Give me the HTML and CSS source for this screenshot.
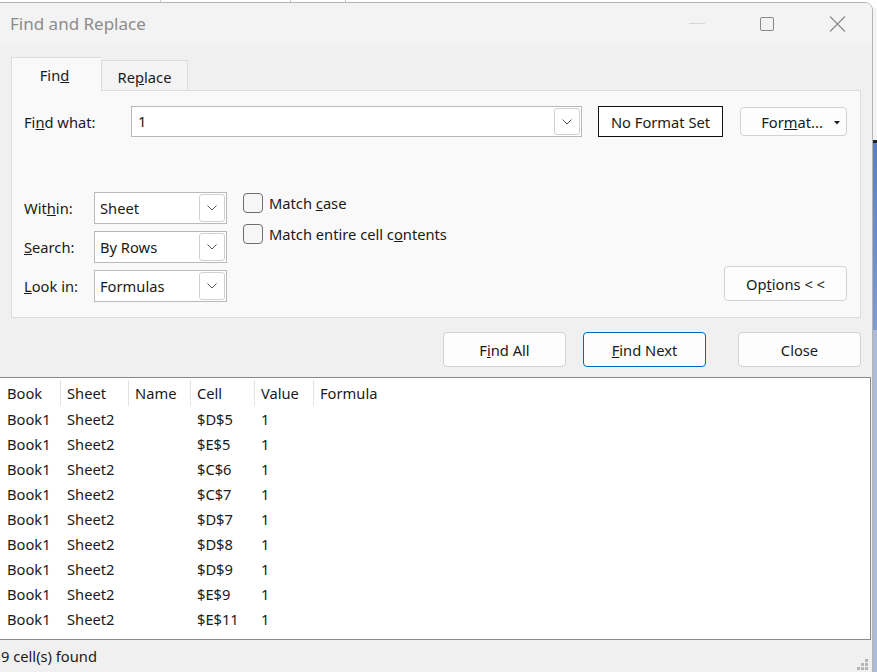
FILE: index.html
```html
<!DOCTYPE html>
<html>
<head>
<meta charset="utf-8">
<link rel="stylesheet" href="styles.css">
</head>
<body>
<div class="backdrop">
  <span class="bd-line bd-l1"></span>
  <span class="bd-line bd-l2"></span>
  <span class="bd-line bd-l3"></span>
</div>
<div class="window">
  <div class="titlebar">
    <span class="title">Find and Replace</span>
    <div class="controls">
      <span class="ctl ctl-min"></span>
      <svg class="ctl" width="16" height="16" viewBox="0 0 16 16"><rect x="1.5" y="1.5" width="13" height="13" rx="1.5" fill="none" stroke="#8a8a8a" stroke-width="1"/></svg>
      <svg class="ctl" width="17" height="16" viewBox="0 0 17 16"><path d="M1 0.5 L16 15.5 M16 0.5 L1 15.5" stroke="#8a8a8a" stroke-width="1.1" fill="none"/></svg>
    </div>
  </div>
  <div class="content">
    <div class="tabs">
      <div class="tab active">Fin<u>d</u></div>
      <div class="tab">Re<u>p</u>lace</div>
    </div>
    <div class="panel">
      <div class="row1">
        <label class="lbl lbl-find">Fi<u>n</u>d what:</label>
        <div class="combo combo-find">
          <span class="combo-text">1</span>
          <span class="dd"><svg width="10" height="6" viewBox="0 0 10 6"><path d="M0.5 0.5 L5 5 L9.5 0.5" fill="none" stroke="#555" stroke-width="1"/></svg></span>
        </div>
        <div class="fmtbox">No Format Set</div>
        <button class="btn btn-format"><span>For<u>m</u>at...</span><svg class="tri" width="6" height="4" viewBox="0 0 6 4"><path d="M0 0 H6 L3 3.5 Z" fill="#222"/></svg></button>
      </div>
      <div class="lower">
        <div class="selects">
          <label class="lbl">Wit<u>h</u>in:</label>
          <div class="combo combo-sel"><span class="combo-text">Sheet</span><span class="dd"><svg width="10" height="6" viewBox="0 0 10 6"><path d="M0.5 0.5 L5 5 L9.5 0.5" fill="none" stroke="#555" stroke-width="1"/></svg></span></div>
          <label class="lbl"><u>S</u>earch:</label>
          <div class="combo combo-sel"><span class="combo-text">By Rows</span><span class="dd"><svg width="10" height="6" viewBox="0 0 10 6"><path d="M0.5 0.5 L5 5 L9.5 0.5" fill="none" stroke="#555" stroke-width="1"/></svg></span></div>
          <label class="lbl"><u>L</u>ook in:</label>
          <div class="combo combo-sel"><span class="combo-text">Formulas</span><span class="dd"><svg width="10" height="6" viewBox="0 0 10 6"><path d="M0.5 0.5 L5 5 L9.5 0.5" fill="none" stroke="#555" stroke-width="1"/></svg></span></div>
        </div>
        <div class="checks">
          <div class="check"><span class="box"></span><span>Match <u>c</u>ase</span></div>
          <div class="check"><span class="box"></span><span>Match entire cell c<u>o</u>ntents</span></div>
        </div>
        <div class="spacer"></div>
        <button class="btn btn-options">Op<u>t</u>ions &lt; &lt;</button>
      </div>
    </div>
    <div class="actions">
      <button class="btn btn-act">F<u>i</u>nd All</button>
      <button class="btn btn-act primary"><u>F</u>ind Next</button>
      <button class="btn btn-act btn-close">Close</button>
    </div>
    <div class="results">
      <div class="rrow head">
        <span class="c c1">Book</span><span class="c c2">Sheet</span><span class="c c3">Name</span><span class="c c4">Cell</span><span class="c c5">Value</span><span class="c c6">Formula</span>
      </div>
      <div class="rrow"><span class="c c1">Book1</span><span class="c c2">Sheet2</span><span class="c c3"></span><span class="c c4">$D$5</span><span class="c c5">1</span><span class="c c6"></span></div>
      <div class="rrow"><span class="c c1">Book1</span><span class="c c2">Sheet2</span><span class="c c3"></span><span class="c c4">$E$5</span><span class="c c5">1</span><span class="c c6"></span></div>
      <div class="rrow"><span class="c c1">Book1</span><span class="c c2">Sheet2</span><span class="c c3"></span><span class="c c4">$C$6</span><span class="c c5">1</span><span class="c c6"></span></div>
      <div class="rrow"><span class="c c1">Book1</span><span class="c c2">Sheet2</span><span class="c c3"></span><span class="c c4">$C$7</span><span class="c c5">1</span><span class="c c6"></span></div>
      <div class="rrow"><span class="c c1">Book1</span><span class="c c2">Sheet2</span><span class="c c3"></span><span class="c c4">$D$7</span><span class="c c5">1</span><span class="c c6"></span></div>
      <div class="rrow"><span class="c c1">Book1</span><span class="c c2">Sheet2</span><span class="c c3"></span><span class="c c4">$D$8</span><span class="c c5">1</span><span class="c c6"></span></div>
      <div class="rrow"><span class="c c1">Book1</span><span class="c c2">Sheet2</span><span class="c c3"></span><span class="c c4">$D$9</span><span class="c c5">1</span><span class="c c6"></span></div>
      <div class="rrow"><span class="c c1">Book1</span><span class="c c2">Sheet2</span><span class="c c3"></span><span class="c c4">$E$9</span><span class="c c5">1</span><span class="c c6"></span></div>
      <div class="rrow"><span class="c c1">Book1</span><span class="c c2">Sheet2</span><span class="c c3"></span><span class="c c4">$E$11</span><span class="c c5">1</span><span class="c c6"></span></div>
    </div>
    <div class="status">
      <span>9 cell(s) found</span>
      <svg class="grip" width="11" height="11" viewBox="0 0 11 11"><g fill="#b4b4b4"><rect x="8" y="0" width="3" height="3"/><rect x="4" y="4" width="3" height="3"/><rect x="8" y="4" width="3" height="3"/><rect x="0" y="8" width="3" height="3"/><rect x="4" y="8" width="3" height="3"/><rect x="8" y="8" width="3" height="3"/></g></svg>
    </div>
  </div>
</div>
</body>
</html>
```

FILE: styles.css
```css
* { box-sizing: border-box; }
html, body {
  margin: 0;
  padding: 0;
  width: 877px;
  height: 672px;
  overflow: hidden;
}
body {
  position: relative;
  font-family: "Noto Sans", "Open Sans", sans-serif;
  font-size: 14.7px;
  color: #1a1a1a;
  background:
    linear-gradient(to bottom,
      #f4f4f4 0, #f4f4f4 140px,
      #222 140px, #222 143px,
      #5b7fc0 143px, #7f9bd0 330px,
      #aebbd6 330px, #aebbd6 672px);
}
.backdrop {
  position: absolute;
  left: 0; top: 0;
  width: 877px;
  height: 8px;
  background: #ffffff;
  overflow: hidden;
}
.bd-line {
  position: absolute;
  top: 0;
  width: 1px;
  height: 8px;
  background: #c8c8c8;
}
.bd-l1 { left: 160px; }
.bd-l2 { left: 290px; }
.bd-l3 { left: 345px; }

.window {
  position: absolute;
  left: -1px;
  top: 2px;
  width: 874px;
  height: 680px;
  border: 1px solid #b3b3b3;
  border-radius: 0 8px 0 0;
  background: #f0f0f0;
  overflow: hidden;
  display: flex;
  flex-direction: column;
}
.titlebar {
  height: 42px;
  flex: none;
  background: #f3f3f3;
  display: flex;
  align-items: center;
  justify-content: space-between;
  padding-left: 10px;
}
.title {
  font-size: 17px;
  color: #8c8c8c;
  margin-top: -2px;
}
.controls {
  display: flex;
  align-items: center;
  height: 100%;
  margin-top: -1px;
}
.ctl { display: block; }
.ctl-min {
  width: 16px;
  height: 1px;
  background: #d6d6d6;
  margin-right: 54px;
}
.controls svg:nth-child(2) { margin-right: 54px; }
.controls svg:nth-child(3) { margin-right: 26px; }

.content {
  flex: 1;
  display: flex;
  flex-direction: column;
  background: #f0f0f0;
}
.tabs {
  display: flex;
  align-items: flex-end;
  margin-top: 12px;
  padding-left: 11px;
  height: 33px;
  position: relative;
  z-index: 1;
}
.tab {
  height: 30px;
  width: 87px;
  border: 1px solid #dcdcdc;
  border-bottom: none;
  background: #f3f3f3;
  display: flex;
  align-items: center;
  justify-content: center;
  padding-top: 2px;
}
.tab.active {
  height: 34px;
  width: 90px;
  background: #f9f9f9;
  margin-bottom: -1px;
  border-right: none;
  padding-top: 0;
  padding-right: 4px;
}
.panel {
  margin-left: 11px;
  width: 850px;
  height: 228px;
  border: 1px solid #dcdcdc;
  background: #f9f9f9;
  padding: 15px 13px 15px 12px;
  display: flex;
  flex-direction: column;
}
.row1 {
  display: flex;
  align-items: center;
  height: 31px;
}
.lbl { display: flex; align-items: center; }
.lbl-find { width: 107px; }
.combo {
  background: #fff;
  border: 1px solid #b9b9b9;
  display: flex;
  align-items: center;
  justify-content: space-between;
  padding: 1px;
}
.combo-text { padding-left: 6px; }
.combo-find {
  width: 451px;
  height: 31px;
  align-items: stretch;
}
.combo-find .combo-text { padding-top: 3px; padding-left: 5px; }
.dd {
  width: 26px;
  border: 1px solid #d0d0d0;
  border-radius: 3px;
  display: flex;
  align-items: center;
  justify-content: center;
  background: #fff;
}
.fmtbox {
  margin-left: 16px;
  width: 125px;
  height: 31px;
  border: 1px solid #111;
  background: #fff;
  display: flex;
  align-items: center;
  justify-content: center;
}
.btn {
  font-family: inherit;
  font-size: 14.7px;
  color: #1a1a1a;
  background: #fdfdfd;
  border: 1px solid #d2d2d2;
  border-radius: 4px;
  padding: 0;
  display: flex;
  align-items: center;
  justify-content: center;
}
.btn-format {
  margin-left: 17px;
  width: 107px;
  height: 29px;
  position: relative;
}
.btn-format span { margin-left: -3px; }
.btn-format .tri {
  position: absolute;
  right: 6px;
  top: 13px;
}
.lower {
  margin-top: 55px;
  display: flex;
  align-items: flex-start;
  height: 110px;
}
.selects {
  display: grid;
  grid-template-columns: 70px 133px;
  grid-auto-rows: 32px;
  row-gap: 7px;
}
.combo-sel {
  height: 32px;
  align-items: stretch;
}
.combo-sel .combo-text { display: flex; align-items: center; padding-left: 4px; }
.checks {
  margin-left: 16px;
  margin-top: 1px;
  display: flex;
  flex-direction: column;
  row-gap: 11px;
}
.check {
  display: flex;
  align-items: center;
  height: 20px;
}
.box {
  width: 20px;
  height: 20px;
  border: 1px solid #6e6e6e;
  border-radius: 4px;
  background: #f6f6f6;
  margin-right: 6px;
}
.spacer { flex: 1; }
.btn-options {
  align-self: flex-end;
  width: 123px;
  height: 35px;
  margin-bottom: 1px;
}
.actions {
  display: flex;
  justify-content: flex-end;
  margin-top: 14px;
  padding-right: 11px;
  height: 35px;
}
.btn-act {
  width: 123px;
  height: 35px;
  margin-left: 17px;
}
.btn-close { margin-left: 32px; }
.btn-act.primary { border-color: #0067c0; }
.results {
  margin-top: 10px;
  height: 263px;
  background: #fff;
  border-top: 1px solid #8a8a8a;
  border-bottom: 1px solid #8a8a8a;
  border-right: 1px solid #8a8a8a;
  padding-top: 2px;
  padding-left: 1px;
  margin-right: 1px;
  position: relative;
}
.rrow {
  display: flex;
  height: 25px;
  align-items: center;
}
.rrow.head { height: 26px; }
.c { padding-left: 6px; white-space: nowrap; }
.c1 { width: 60px; }
.c2 { width: 68px; }
.c3 { width: 62px; }
.c4 { width: 64px; }
.c5 { width: 59px; }
.c6 { width: 100px; }
.head .c {
  height: 26px;
  display: flex;
  align-items: center;
}
.head .c1, .head .c2, .head .c3, .head .c4, .head .c5 {
  border-right: 1px solid #e3e3e3;
}
.status {
  height: 32px;
  display: flex;
  align-items: center;
  padding-left: 1px;
  position: relative;
}
.grip {
  position: absolute;
  right: 4px;
  bottom: 2px;
}
```
